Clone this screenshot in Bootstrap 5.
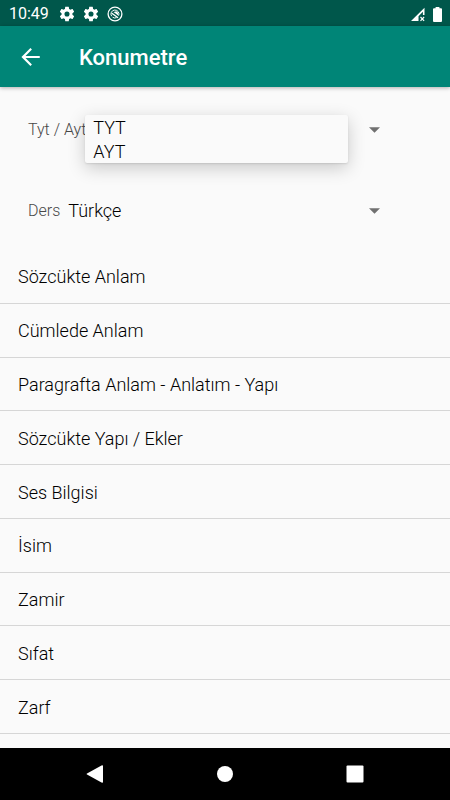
<!DOCTYPE html>
<html lang="tr">
<head>
<meta charset="utf-8">
<meta name="viewport" content="width=device-width, initial-scale=1">
<title>Konumetre</title>
<link rel="stylesheet" href="https://cdn.jsdelivr.net/npm/bootstrap@5.3.0/dist/css/bootstrap.min.css">
<style>
body { font-family: Roboto, "Noto Sans", sans-serif; font-weight: 300; background: #fafafa; color: #000; font-size: 18px; line-height: 24px; }
.status-bar { background: #00574b; height: 26px; padding: 2px 8px 0 9px; font-size: 16px; font-weight: 400; }
.status-icons { margin-left: 10px; gap: 8px; }
.app-bar { background: #008577; height: 61px; padding: 0 17px; box-shadow: 0 1px 4px rgba(0,0,0,.3); }
.app-bar h1 { font-size: 22px; line-height: 28px; font-weight: 500; margin-left: 34px; padding-top: 2px; }
.filters { padding: 31px 58px 27px 28px; gap: 57px; }
.filters label { font-size: 16px; color: #484848; }
.spinner-select { appearance: none; border: 0; border-radius: 0; padding: 0 32px 0 8px; height: 24px; font-weight: 300; line-height: 24px; color: #000;
  background: url("data:image/svg+xml,%3Csvg xmlns='http://www.w3.org/2000/svg' viewBox='0 0 12 6'%3E%3Cpath d='M0 0h12L6 6z' fill='%23707070'/%3E%3C/svg%3E") no-repeat right 12px center / 11px 6px; }
.spinner-menu { top: -3px; left: -1px; right: 44px; background: #fafafa; border-radius: 2px; box-shadow: 0 5px 18px rgba(0,0,0,.2), 0 1px 2px rgba(0,0,0,.1); }
.spinner-menu button { padding: 1px 8px 0; height: 24px; font-weight: 300; line-height: 24px; color: #000; }
.topics { padding-bottom: 14px; }
.topics a { flex: 1 1 0; min-height: 48px; padding: 2px 18px 0; border-bottom: 1px solid #d6d6d6; color: #000; }
.nav-keys { height: 52px; padding: 0 30px; }
</style>
<script src="https://cdn.jsdelivr.net/npm/bootstrap@5.3.0/dist/js/bootstrap.bundle.min.js"></script>
</head>
<body>
<svg class="d-none" xmlns="http://www.w3.org/2000/svg">
  <symbol id="gear" viewBox="0 0 24 24"><path fill="currentColor" d="M19.43 12.98c.04-.32.07-.64.07-.98s-.03-.66-.07-.98l2.11-1.65c.19-.15.24-.42.12-.64l-2-3.46c-.12-.22-.39-.3-.61-.22l-2.49 1c-.52-.4-1.08-.73-1.69-.98l-.38-2.65A.49.49 0 0 0 14 2h-4c-.25 0-.46.18-.49.42l-.38 2.65c-.61.25-1.17.59-1.69.98l-2.49-1c-.23-.09-.49 0-.61.22l-2 3.46c-.13.22-.07.49.12.64l2.11 1.65c-.04.32-.07.65-.07.98s.03.66.07.98l-2.11 1.65c-.19.15-.24.42-.12.64l2 3.46c.12.22.39.3.61.22l2.49-1c.52.4 1.08.73 1.69.98l.38 2.65c.03.24.24.42.49.42h4c.25 0 .46-.18.49-.42l.38-2.65c.61-.25 1.17-.59 1.69-.98l2.49 1c.23.09.49 0 .61-.22l2-3.46c.12-.22.07-.49-.12-.64zM12 15.5a3.5 3.5 0 1 1 0-7 3.5 3.5 0 0 1 0 7z"/></symbol>
</svg>
<div class="d-flex flex-column min-vh-100">
  <div class="status-bar d-flex align-items-center justify-content-between text-white">
    <div class="d-flex align-items-center">
      <span>10:49</span>
      <div class="status-icons d-flex align-items-center">
        <svg width="16" height="16" viewBox="1 1 22 22" aria-hidden="true"><use href="#gear" width="24" height="24"/></svg>
        <svg width="16" height="16" viewBox="1 1 22 22" aria-hidden="true"><use href="#gear" width="24" height="24"/></svg>
        <svg width="16" height="16" viewBox="0 0 16 16" fill="none" stroke="#fff" aria-hidden="true"><circle cx="8" cy="8" r="6.900" stroke-width="1.300"/><path d="M4.600 10.200A4 4 0 1 1 11.600 9.700M5.600 11.200A4 4 0 0 0 9.500 11.700" stroke-width="1"/><path d="M6.500 6L9.500 5.200 11.200 7 11.200 9.600z" fill="#fff" stroke="none"/><path d="M4.800 7.300L11 11.800" stroke-width="1.400"/></svg>
      </div>
    </div>
    <div class="d-flex align-items-center gap-2">
      <svg width="15" height="15" viewBox="0 0 15 15" aria-hidden="true"><path d="M1 14L14.500.8V8h-1.600V4.800L8.500 9.200V14z" fill="#fff"/><path d="M10.500 10l3.600 3.800M14.100 10l-3.600 3.800" stroke="#fff" stroke-width="1.200"/></svg>
      <svg width="9" height="15" viewBox="0 0 9 15" aria-hidden="true"><path d="M2.600 0h3.800v1.300H8q1 0 1 1V14q0 1-1 1H1q-1 0-1-1V2.300q0-1 1-1h1.600z" fill="#fff"/></svg>
    </div>
  </div>
  <header class="app-bar d-flex align-items-center text-white position-relative">
    <button type="button" class="btn p-0 border-0 text-white d-flex" aria-label="Geri">
      <svg width="28" height="28" viewBox="0 0 24 24" aria-hidden="true"><path fill="currentColor" d="M19.500 11.100H7.300l5.500-5.600L11.500 4.200 3.800 12l7.700 7.800 1.300-1.300-5.500-5.600H19.500z"/></svg>
    </button>
    <h1 class="mb-0">Konumetre</h1>
  </header>
  <main class="d-flex flex-column flex-grow-1">
    <form class="filters d-flex flex-column">
      <div class="d-flex align-items-center">
        <label for="exam" class="text-nowrap">Tyt / Ayt</label>
        <div class="position-relative flex-grow-1">
          <select id="exam" class="spinner-select w-100 d-block"><option>TYT</option><option>AYT</option></select>
          <div class="spinner-menu position-absolute d-flex flex-column">
            <button type="button" class="bg-transparent border-0 text-start">TYT</button>
            <button type="button" class="bg-transparent border-0 text-start">AYT</button>
          </div>
        </div>
      </div>
      <div class="d-flex align-items-center">
        <label for="lesson">Ders</label>
        <select id="lesson" class="spinner-select flex-grow-1"><option>Türkçe</option></select>
      </div>
    </form>
    <nav class="topics d-flex flex-column flex-grow-1" aria-label="Konular">
      <a href="#" class="d-flex align-items-center text-decoration-none">Sözcükte Anlam</a>
      <a href="#" class="d-flex align-items-center text-decoration-none">Cümlede Anlam</a>
      <a href="#" class="d-flex align-items-center text-decoration-none">Paragrafta Anlam - Anlatım - Yapı</a>
      <a href="#" class="d-flex align-items-center text-decoration-none">Sözcükte Yapı / Ekler</a>
      <a href="#" class="d-flex align-items-center text-decoration-none">Ses Bilgisi</a>
      <a href="#" class="d-flex align-items-center text-decoration-none">İsim</a>
      <a href="#" class="d-flex align-items-center text-decoration-none">Zamir</a>
      <a href="#" class="d-flex align-items-center text-decoration-none">Sıfat</a>
      <a href="#" class="d-flex align-items-center text-decoration-none">Zarf</a>
    </nav>
  </main>
  <footer class="nav-keys bg-black d-flex align-items-center justify-content-around">
    <button type="button" class="btn p-0 border-0 d-flex" aria-label="Geri tuşu"><svg width="18" height="18" viewBox="0 0 18 18"><path d="M1 8.500L15.500.5Q17 0 17 1v16q0 1-1.500.5L1 9.500Q0 9 1 8.500z" fill="#fff"/></svg></button>
    <button type="button" class="btn p-0 border-0 d-flex" aria-label="Ana ekran"><svg width="18" height="18" viewBox="0 0 18 18"><circle cx="9" cy="9" r="8" fill="#fff"/></svg></button>
    <button type="button" class="btn p-0 border-0 d-flex" aria-label="Son uygulamalar"><svg width="18" height="18" viewBox="0 0 18 18"><rect x=".5" y=".5" width="17" height="17" rx="1" fill="#fff"/></svg></button>
  </footer>
</div>
</body>
</html>
